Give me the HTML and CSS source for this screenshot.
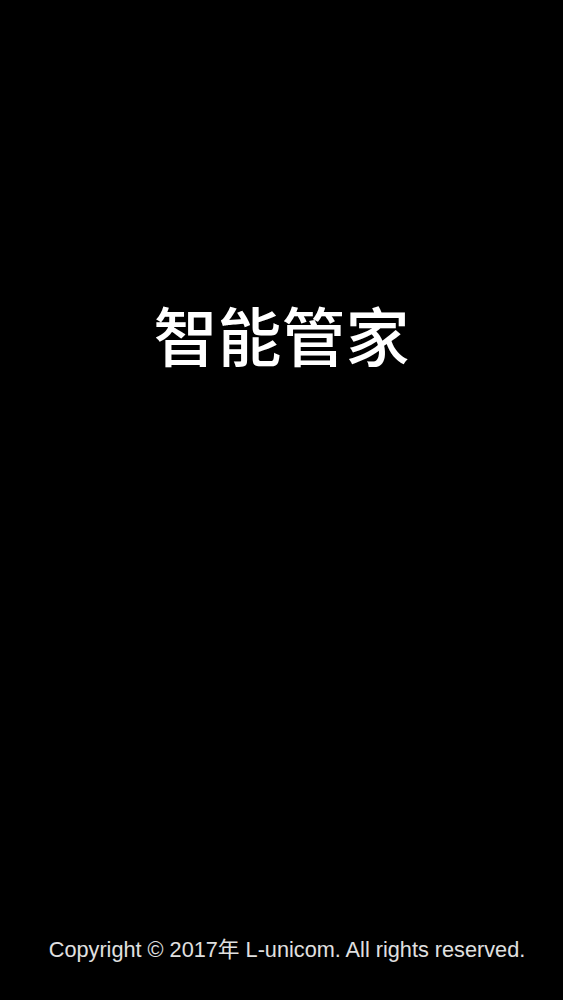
FILE: index.html
```html
<!DOCTYPE html>
<html lang="zh">
<head>
<meta charset="utf-8">
<link rel="stylesheet" href="styles.css">
</head>
<body>
<div class="screen">
  <div class="center"><h1 class="title">智能管家</h1></div>
  <footer class="footer">Copyright © 2017年 L-unicom. All rights reserved.</footer>
</div>
</body>
</html>
```
FILE: styles.css
```css
html, body { margin: 0; padding: 0; background: #000; }
.screen {
  width: 563px;
  height: 1000px;
  display: flex;
  flex-direction: column;
  background: #000;
}
.center {
  height: 666px;
  display: flex;
  align-items: center;
  justify-content: center;
}
.title {
  margin: 0;
  color: #fff;
  font-family: "Noto Sans CJK SC", sans-serif;
  font-weight: 500;
  font-size: 64px;
  line-height: 1;
}
.footer {
  margin-top: 270px;
  padding-left: 11px;
  text-align: center;
  color: #e0e0e0;
  font-family: "Liberation Sans", "Noto Sans CJK SC", sans-serif;
  font-size: 21.7px;
  line-height: 28px;
}
```
